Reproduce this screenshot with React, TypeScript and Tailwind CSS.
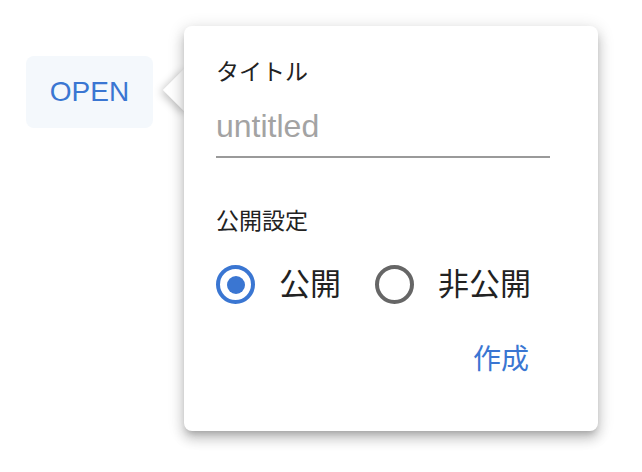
import React from "react";

export default function App() {
  return (
    <div className="min-h-[472px] w-[642px] bg-white flex items-start pl-[26px] pt-[26px] font-['Liberation_Sans','Noto_Sans_CJK_JP',sans-serif]">
      <button className="mt-[30px] w-[127px] h-[72px] rounded-lg bg-[#f4f8fc] text-[#3a76d2] text-[28px] leading-[28px] flex items-center justify-center">
        OPEN
      </button>
      <div className="relative ml-[31px]">
        <div className="absolute left-[-15px] top-[49px] w-[30px] h-[30px] rotate-45 bg-white shadow-[0_3px_8px_rgba(0,0,0,0.25)]" />
        <div className="relative w-[414px] h-[405px] bg-white rounded-lg shadow-[0_5px_6px_-3px_rgba(0,0,0,0.2),0_8px_12px_1px_rgba(0,0,0,0.14),0_3px_16px_2px_rgba(0,0,0,0.12)] pt-[35px] pl-[32px] pr-[48px] flex flex-col">
          <div className="text-[23px] leading-[23px] text-[#222]">タイトル</div>
          <input
            className="mt-[26px] block w-full text-[32px] leading-[32px] h-[48px] pb-[14px] border-b-2 border-[#9a9a9a] outline-none text-[#222] placeholder:text-[#a3a3a3] bg-transparent"
            placeholder="untitled"
          />
          <div className="mt-[52px] text-[23px] leading-[23px] text-[#222]">公開設定</div>
          <div className="mt-[32px] flex items-center h-[39px]">
            <div className="w-[39px] h-[39px] rounded-full border-4 border-[#3a76d2] flex items-center justify-center">
              <div className="w-[18px] h-[18px] rounded-full bg-[#3a76d2]" />
            </div>
            <span className="ml-[24px] text-[31px] leading-[31px] text-[#222]">公開</span>
            <div className="ml-[34px] w-[39px] h-[39px] rounded-full border-4 border-[#666]" />
            <span className="ml-[24px] text-[31px] leading-[31px] text-[#222]">非公開</span>
          </div>
          <div className="mt-[42px] flex justify-end pr-[21px]">
            <span className="text-[28px] leading-[28px] text-[#3a76d2]">作成</span>
          </div>
        </div>
      </div>
    </div>
  );
}
